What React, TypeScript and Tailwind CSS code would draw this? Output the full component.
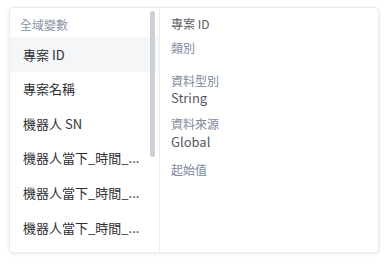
import React from 'react';

const variables = [
  '專案 ID',
  '專案名稱',
  '機器人 SN',
  '機器人當下_時間_...',
  '機器人當下_時間_...',
  '機器人當下_時間_...',
];

const App: React.FC = () => {
  const selected = 0;

  return (
    <div
      className="w-[388px] h-[264px] bg-white pl-[9px] pt-[7px]"
      style={{ fontFamily: '"Noto Sans CJK TC", "Noto Sans", sans-serif' }}
    >
      <div className="w-[370px] h-[246px] flex rounded border border-[#e8eaee] shadow-[0_1px_4px_rgba(0,0,0,0.08)] overflow-hidden bg-white">
        {/* variable list */}
        <div className="relative w-[150px] shrink-0 border-r border-[#eceef1] overflow-hidden">
          <div className="absolute left-[140px] top-[3px] w-[5px] h-[146px] rounded-full bg-[#cbcfd6]" />
          <div className="pl-[10px] pt-[8px] h-[29px] text-[12px] leading-[17px] text-[#8a94a6]">全域變數</div>
          {variables.map((name, i) => (
            <div
              key={i}
              className={`h-[34.6px] flex items-center pl-[13px] pr-[12px] text-[13px] text-[#303133] whitespace-nowrap ${
                i === selected ? 'bg-[#f5f6f8]' : ''
              }`}
            >
              {name}
            </div>
          ))}
        </div>

        {/* detail */}
        <div className="flex-1 pl-[11px] pt-[7px] text-[12px] leading-[17px]">
          <div className="text-[#5a5e66]">專案 ID</div>
          <div className="mt-[7px] text-[#7d89a0]">類別</div>
          <div className="mt-[16px] text-[#7d89a0]">資料型別</div>
          <div className="text-[13px] text-[#55585e]">String</div>
          <div className="mt-[9px] text-[#7d89a0]">資料來源</div>
          <div className="mt-[1px] text-[13px] text-[#55585e]">Global</div>
          <div className="mt-[11px] text-[#7d89a0]">起始值</div>
        </div>
      </div>
    </div>
  );
};

export default App;
